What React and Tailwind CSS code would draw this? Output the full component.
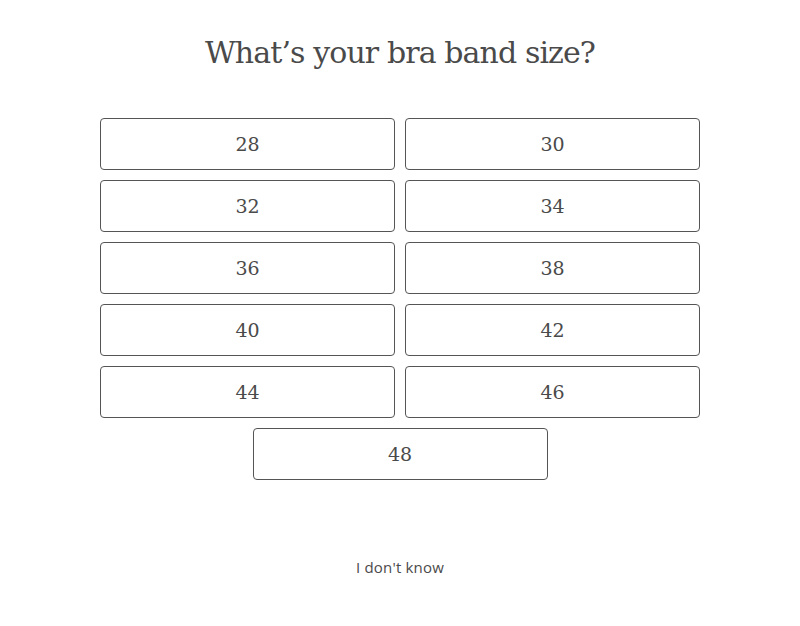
export default function App() {
  const sizes = ["28", "30", "32", "34", "36", "38", "40", "42", "44", "46"];
  return (
    <div className="w-full min-h-screen bg-white flex flex-col items-center text-[#4a4a4a]">
      <h1 className="mt-[33px] h-[40px] leading-[40px] text-[30px] tracking-[-0.9px] font-['DejaVu_Serif',serif]">
        What’s your bra band size?
      </h1>
      <div className="mt-[45px] w-[600px] grid grid-cols-2 gap-[10px]">
        {sizes.map((s) => (
          <button
            key={s}
            className="h-[52px] border border-[#555] rounded-[4px] bg-white text-[19px] font-['DejaVu_Serif',serif] text-[#4a4a4a]"
          >
            {s}
          </button>
        ))}
        <button className="col-span-2 justify-self-center w-[295px] h-[52px] border border-[#555] rounded-[4px] bg-white text-[19px] font-['DejaVu_Serif',serif] text-[#4a4a4a]">
          48
        </button>
      </div>
      <button className="mt-[76px] text-[15px] tracking-[0.2px] font-['Open_Sans',sans-serif] text-[#4a4a4a]">
        I don't know
      </button>
    </div>
  );
}
